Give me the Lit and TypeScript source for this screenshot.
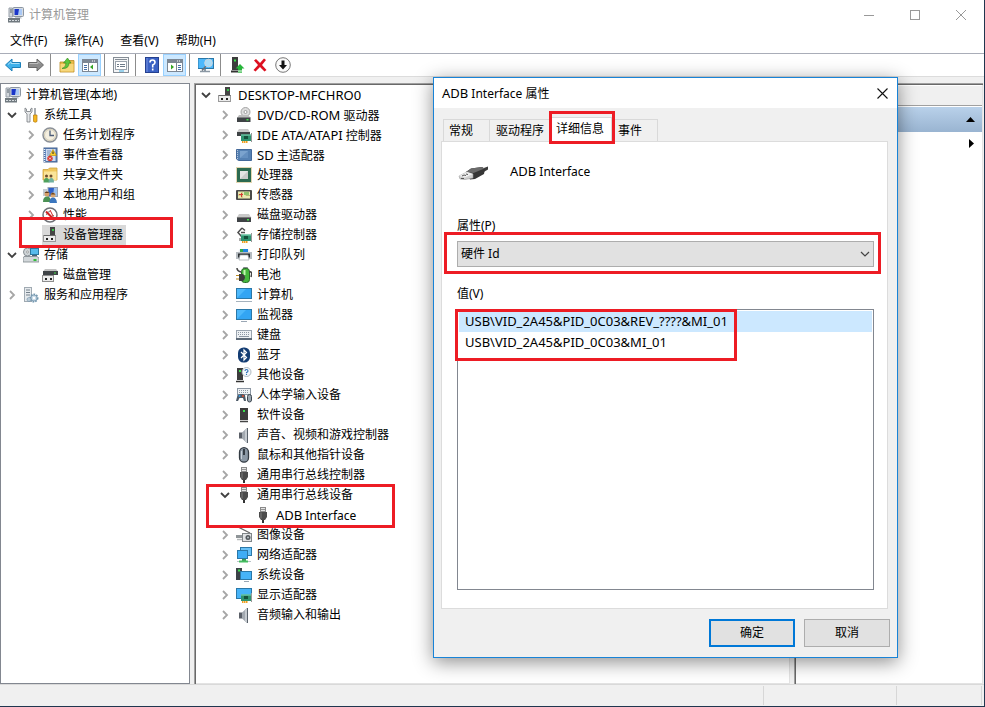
import { LitElement, html, css, svg, nothing } from "lit";
import { customElement, property, state } from "lit/decorators.js";
import { classMap } from "lit/directives/class-map.js";

const monitor = svg`
  <rect x="0.5" y="2.5" width="15" height="10" fill="#4db8fb" stroke="#2b78a8"/>
  <path d="M1 12L10 3h5v9z" fill="#33a5f3"/>
  <path d="M5 14.5h6" stroke="#9aa7b4"/>`;

const card = svg`
  <rect x="5" y="7.500" width="10" height="6.500" fill="#2f9370"/>
  <rect x="8" y="9" width="4" height="3" fill="#14513c"/>
  <path d="M5 8h10" stroke="#7fd6b4"/>
  <path d="M6 15h6" stroke="#f0a020" stroke-width="2" stroke-dasharray="1.500 .5"/>
  <path d="M15.500 6v9" stroke="#999"/>`;

const keyboard = svg`
  <rect x="0.5" y="3.500" width="15" height="9" fill="#eef1f4" stroke="#9aa4af"/>
  <path d="M2 5.500h12M2 7.500h12" stroke="#8c97a3" stroke-dasharray="1 1"/>
  <path d="M3 9.500h10" stroke="#8c97a3"/>
  <path d="M0 12h16" stroke="#5f6b78" stroke-width="2"/>`;

const speaker = svg`
  <path d="M3 5.500h3.500v6H3z" fill="#5b6068"/>
  <path d="M6 5.500L11 1v15l-5-4.500z" fill="#a3a9b0"/>
  <path d="M9 3l2-2v15l-2-2z" fill="#c6cbd0"/>
  <path d="M11.500 1v15" stroke="#59616a"/>`;

const usb = svg`
  <rect x="5.500" y="0.500" width="5" height="4" fill="#e4e4e4" stroke="#8a8a8a"/>
  <path d="M6.500 2.500h1M8.500 2.500h1" stroke="#444"/>
  <path d="M4 5h8v5l-2 3H6l-2-3z" fill="#4b4b4b"/>
  <path d="M6 5.500v6" stroke="#7c7c7c"/>
  <path d="M8 13v3" stroke="#333" stroke-width="2"/>`;

const computer = svg`
  <rect x="5" y="0.500" width="10.500" height="9" rx="1" fill="#d7dce2" stroke="#8b95a1"/>
  <rect x="6.500" y="2" width="7.500" height="6" fill="#1b36c8"/>
  <path d="M10 8l1-6h3v6z" fill="#a9c8f5"/>
  <path d="M1 1h3.500v9H1z" fill="#d2d7dc" stroke="#979fa8"/>
  <path d="M2 3h2M2 5h2" stroke="#55606b"/>
  <path d="M7 10h6l1 1.500H7z" fill="#c2c9d0"/>
  <rect x="0" y="11" width="12" height="4.500" fill="#70797f"/>
  <path d="M1 13.500h10" stroke="#d5dade" stroke-dasharray="2 1"/>`;

const device = svg`
  <path d="M8 0h5v9H8z" fill="#454545"/>
  <rect x="10" y="2" width="2" height="2" fill="#39c84b"/>
  <rect x="1.500" y="8.500" width="12" height="6" fill="#ececec" stroke="#9a9a9a"/>
  <path d="M2 8.500h11.500" stroke="#6c6c6c"/>
  <path d="M4 11h2v2H4zM9 11h2v2H9z" fill="#222"/>`;

const drive = svg`
  <path d="M3 7h10l2.500 4h-15z" fill="#c9c9c9"/>
  <path d="M1 10.500h14V15H1z" fill="#3f4346"/>
  <path d="M1 10.500h14" stroke="#777"/>
  <rect x="11" y="12" width="2" height="1.500" fill="#46e04c"/>`;

const ICONS: Record<string, unknown> = {
  computer,
  device,
  monitor,
  keyboard,
  speaker,
  usb,
  drive,
  tools: svg`
    <path d="M2 1v4l2 2v8h3V7l2-2V1L7.500 2v2.500h-4V2z" fill="#e6e8ea" stroke="#767b80" stroke-width=".8"/>
    <path d="M12 1v7" stroke="#8b9096" stroke-width="1.500"/>
    <path d="M10.500 8h3.500v6.500q-1.700 1.500-3.500 0z" fill="#f5b61f" stroke="#b47a0b" stroke-width=".7"/>`,
  clock: svg`
    <circle cx="8" cy="8" r="7" fill="#f4efe0" stroke="#8b9097" stroke-width="1.500"/>
    <circle cx="8" cy="8" r="5.500" fill="none" stroke="#d3ccb5"/>
    <path d="M8 3.500V8.500h4" fill="none" stroke="#4b5c78" stroke-width="1.300"/>`,
  events: svg`
    <rect x="2" y="1" width="13" height="14" fill="#5d83bc" stroke="#45638f"/>
    <rect x="4" y="2" width="9.500" height="12" fill="#cfdcf0"/>
    <path d="M2.500 2v13" stroke="#e7eefb" stroke-width="1.500" stroke-dasharray="1 1"/>
    <path d="M5 4h4M5 6h3M5 8h3" stroke="#7590bb"/>
    <path d="M11 2.500l3.500 6h-7z" fill="#ffd12b" stroke="#b48500" stroke-width=".6"/>
    <path d="M11 4.500v2.500" stroke="#222"/>
    <circle cx="8" cy="11.500" r="2.700" fill="#d9352d"/>
    <path d="M7 10.500l2 2M9 10.500l-2 2" stroke="#fff" stroke-width=".8"/>`,
  share: svg`
    <path d="M1 2.500h5L7.500 1H15v12H1z" fill="#f0c75c" stroke="#cda33c" stroke-width=".8"/>
    <path d="M2 4.500h12.500V13H2z" fill="#fae49a"/>
    <circle cx="4.500" cy="9" r="1.500" fill="#6d4b2c"/><circle cx="9" cy="9" r="1.500" fill="#6d4b2c"/>
    <path d="M1.500 15.500q0-4.500 3-4.500t3 4.500z" fill="#4ea05c"/>
    <path d="M6.500 15.500q0-4.500 2.800-4.500t2.700 4.500z" fill="#6fb0a0"/>`,
  users: svg`
    <rect x="6" y="0.500" width="9.500" height="9" fill="#2f60c8" stroke="#97a3b4"/>
    <path d="M11 9l1-8h3v8z" fill="#9bc1f0"/>
    <path d="M1 2h4v7H1z" fill="#c5cbd2"/>
    <circle cx="5" cy="7" r="2.500" fill="#d9a06a"/><path d="M2.500 6q2-3 5 0" fill="#5e3b1d"/>
    <circle cx="11" cy="8" r="2.500" fill="#dba873"/><path d="M8.500 7.500q2-3.500 5 0" fill="#6d4822"/>
    <path d="M1 15q0-5.500 4-5.500t4 5.500z" fill="#4b9155"/>
    <path d="M7.500 16q0-5.500 3.500-5.500t4 5.500z" fill="#3b76be"/>`,
  perf: svg`
    <circle cx="8" cy="8" r="7" fill="#fff" stroke="#6d7076" stroke-width="1.500"/>
    <path d="M4.500 8A3.500 3.500 0 0 1 8 4.500M11.500 8A3.500 3.500 0 0 1 8 11.500" fill="none" stroke="#777"/>
    <path d="M4 4.500l8 8" stroke="#cf2222" stroke-width="2"/>
    <path d="M8 3l3 6" stroke="#cf2222"/>`,
  storage: svg`
    <circle cx="4.500" cy="5" r="4" fill="#cfd5d8" stroke="#868e93"/>
    <circle cx="4.500" cy="5" r="1" fill="#fff" stroke="#777" stroke-width=".6"/>
    <rect x="7.500" y="1.500" width="8" height="6" fill="#58bbec" stroke="#2c789f"/>
    <path d="M9 8.500h5" stroke="#47647a"/>
    <path d="M1 9.500h13l2 1.500v4H0v-4z" fill="#d2d7da" stroke="#7c858b" stroke-width=".8"/>
    <rect x="10.500" y="12" width="3" height="2" fill="#31bd3a"/>`,
  disk: svg`
    <path d="M3 2h11l2 2.500H1z" fill="#c2c2c2"/>
    <path d="M1 4h15v4H1z" fill="#3f4346"/>
    <rect x="12" y="5.500" width="2" height="1" fill="#46e04c"/>
    <rect x="0.500" y="8.500" width="11" height="6" fill="#ececec" stroke="#8e8e8e"/>
    <path d="M3 11h2v2H3zM8 11h2v2H8z" fill="#222"/>`,
  services: svg`
    <rect x="1.500" y="0.500" width="7" height="14" fill="#e6eaed" stroke="#a0aab2"/>
    <path d="M3 3h4M3 5.500h4M3 8h4" stroke="#74818c"/>
    <circle cx="11" cy="11" r="3.500" fill="#c8dbe9" stroke="#6f94ad" stroke-width="2" stroke-dasharray="1.600 1"/>
    <circle cx="11" cy="11" r="3" fill="#c8dbe9" stroke="#7c9bb0" stroke-width=".8"/>
    <circle cx="11" cy="11" r="1.200" fill="#fff"/>
    <circle cx="6" cy="12.500" r="2" fill="#b9cbd8" stroke="#7492a8" stroke-dasharray="1 .6"/>`,
  dvd: svg`
    <circle cx="9.500" cy="5" r="4.500" fill="#dedede" stroke="#9c9c9c" stroke-width=".9"/>
    <circle cx="9.500" cy="5" r="1.500" fill="#fff" stroke="#8c8c8c" stroke-width=".8"/>
    <path d="M3 8h9l3 3H1z" fill="#bdbdbd"/>
    <path d="M1 10.500h13.500V15H1z" fill="#3f4346"/>
    <rect x="10.500" y="12" width="2" height="1.500" fill="#46e04c"/>`,
  ide: svg`
    <path d="M3 2h9l2 3H1z" fill="#c9c9c9"/><path d="M1 5h13v4H1z" fill="#3f4346"/>${card}`,
  sd: svg`
    <path d="M0.500 2.500h15v11h-13L.5 12z" fill="#5581b3" stroke="#44699a"/>
    <rect x="4" y="4" width="8" height="7" fill="#7ba3ce"/>
    <path d="M4 11l8-7v7z" fill="#6590c0"/>
    <path d="M1.500 3v9" stroke="#b5c8dd" stroke-dasharray="1 1"/>`,
  cpu: svg`
    <rect x="0.500" y="0.500" width="15" height="15" fill="none" stroke="#c4ac62" stroke-dasharray="1 1"/>
    <rect x="1" y="1" width="14" height="14" fill="#2c6a50"/>
    <rect x="4" y="4" width="8" height="8" fill="#e4e4e4"/>
    <path d="M4 12L12 4v8z" fill="#cacaca"/>`,
  sensor: svg`
    <rect x="0" y="3" width="16" height="10" rx="1" fill="#4a4a4a"/>
    <rect x="2" y="4.500" width="12" height="7" fill="#eaeab0"/>
    <path d="M2 8h4M6 4.500v7M10 4.500v4h4" stroke="#b8bb72" fill="none"/>
    <path d="M8 5h5v3H8z" fill="#8fc46c"/><path d="M3 7.500h4M5.500 6v4" stroke="#d83b30"/>`,
  controller: svg`
    <path d="M6 1L2 5.500 6 10M6 1l3 2.500M5 5.500h4" fill="none" stroke="#4d4d4d" stroke-width="1.500"/>
    <path d="M3 11h3v3H3z" fill="#aaa"/>${card}`,
  printer: svg`
    <path d="M3 2.500h10l1 3H2z" fill="#e9eef2"/>
    <path d="M4 2h4v3.500H4z" fill="#2fa84d"/><path d="M7 2h5v3.500H7z" fill="#1d84e0"/>
    <path d="M0 5h16v7H0z" fill="#b6bcc1"/>
    <path d="M2 6.500h12v4H2z" fill="#2f3437"/>
    <path d="M4 8h8l1 5H3z" fill="#fff" stroke="#9ca3a8" stroke-width=".7"/>`,
  battery: svg`
    <rect x="7" y="0" width="5" height="3" rx="1" fill="#7f858a"/>
    <rect x="5.500" y="1.500" width="8" height="14" rx="3" fill="#46b83d" stroke="#286c26"/>
    <path d="M8.500 3v5" stroke="#c5f4b3" stroke-width="2"/>
    <path d="M13 5q4-1 2 5" fill="none" stroke="#444" stroke-width="1.500"/>
    <path d="M0 8.500h3M0 12h3" stroke="#bd8b1e" stroke-width="1.200"/>
    <path d="M3 7h4q4 3.500 0 7H3z" fill="#3c3c3c"/><path d="M1 1q0 3 4 4" fill="none" stroke="#444" stroke-width="1.500"/>`,
  pc: svg`
    <rect x="0.500" y="1.500" width="15" height="10" fill="#4db8fb" stroke="#2b78a8"/>
    <path d="M1 11L10 2h5v9z" fill="#33a5f3"/>
    <path d="M0 14.500h16" stroke="#a5b2bd"/>`,
  bluetooth: svg`
    <rect x="2" y="0.500" width="12" height="15" rx="5.500" fill="#133c73"/>
    <path d="M5 5l5.500 5.500L8 13V3l2.500 2.500L5 11" fill="none" stroke="#fff" stroke-width="1.200"/>`,
  unknown: svg`
    <path d="M1 1h6v12H1z" fill="#3c3c3c"/><path d="M0 14.500h8" stroke="#333" stroke-width="1.500"/>
    <rect x="3" y="3" width="2" height="2" fill="#39e04b"/>
    <circle cx="10.500" cy="5" r="4.500" fill="#f4f8fb" stroke="#9da8b0" stroke-width=".8"/>
    <path d="M9 4q0-1.500 1.500-1.500T12 4q0 1-1.500 1.500v.8M10.500 7v1" fill="none" stroke="#2c6fb5" stroke-width="1.100"/>`,
  hid: svg`
    <rect x="1.500" y="1.500" width="13" height="6" fill="#eef1f4" stroke="#8c97a3"/>
    <path d="M3 3.500h10M3 5.500h10" stroke="#8c97a3" stroke-dasharray="1 1"/>
    <path d="M0 14l1.500-6q5-2 7.500 0l1 6H8l-1-3H3.500L2 14z" fill="#4c5966"/>
    <circle cx="3.500" cy="9" r="1" fill="#3b9be2"/><circle cx="7" cy="9" r="1" fill="#e0512f"/>
    <rect x="11.500" y="7.500" width="4" height="7.500" rx="2" fill="#9ba7b1" stroke="#3e4851"/>`,
  software: svg`
    <path d="M4 1h8v12H4z" fill="#3c3c3c"/><rect x="7" y="3" width="2" height="2" fill="#39e04b"/>
    <path d="M4 14.500h8" stroke="#444" stroke-width="1.500"/>`,
  mouse: svg`
    <rect x="3.500" y="0.700" width="9" height="14.500" rx="4.500" fill="#8b98a5" stroke="#333a42" stroke-width="1.300"/>
    <path d="M5.500 4v8" stroke="#c8d1d9"/>
    <path d="M8 2v6" stroke="#20262c" stroke-width="1.600"/>`,
  imaging: svg`
    <path d="M2 0l12 6" stroke="#666" stroke-width="1.300"/>
    <path d="M0 8h6v3H0z" fill="#8f9598"/>
    <rect x="6.500" y="6.500" width="9" height="8" fill="#dfe2e4" stroke="#7f8588"/>
    <circle cx="12" cy="10.500" r="2.500" fill="#52585c"/><circle cx="12" cy="10.500" r="1" fill="#b9c2c9"/>
    <path d="M1 12.500h5" stroke="#b5b9bb" stroke-width="1.500"/>`,
  network: svg`
    <rect x="4.500" y="0.500" width="11" height="8" fill="#68c1f7" stroke="#2b78a8"/>
    <rect x="1.500" y="3.500" width="10" height="8" fill="#3fadf5" stroke="#2b78a8"/>
    <path d="M6 12h4v2H6z" fill="#3a9a52"/><path d="M1 14.500h14" stroke="#b9c4c9"/><path d="M3 14.500h9" stroke="#45bd60" stroke-width="2"/>`,
  system: svg`
    <path d="M0 1h6v12H0z" fill="#3c4248"/><rect x="2" y="2.500" width="2" height="2" fill="#39e04b"/>
    <rect x="4.500" y="4.500" width="11" height="8" fill="#46b3f8" stroke="#2b78a8"/>
    <path d="M8 14.500h5" stroke="#9aa7b4"/>`,
  display: svg`
    <rect x="0.500" y="1.500" width="15" height="10" fill="#46b3f8" stroke="#2b78a8"/>${card}`,
  back: svg`<path d="M0.500 8L7 2v3.500h8.500v5H7V14z" fill="#3fb0ea" stroke="#1c7fb8"/><path d="M3 7.500l3-2.700v1.700h8.500" fill="none" stroke="#a7def8"/>`,
  forward: svg`<path d="M15.500 8L9 2v3.500H0.500v5H9V14z" fill="#8c8c8c" stroke="#686868"/><path d="M1.500 6.500H10V4.500l2 2" fill="none" stroke="#bdbdbd"/>`,
  up: svg`
    <path d="M1 5h5l1.500-1.500H15V15H1z" fill="#e8bb4b" stroke="#b98b23" stroke-width=".8"/>
    <path d="M1.500 7h13v7.500h-13z" fill="#f6d77c"/>
    <path d="M3 11.500q4-1 4-5.500H4.500L8.500 1l3.500 5h-2q0 6-7 5.500z" fill="#5cc53c" stroke="#2f8a1c" stroke-width=".6"/>`,
  treePane: svg`
    <rect x="0.500" y="2.500" width="15" height="12" fill="#fff" stroke="#7c8794"/>
    <path d="M1 4.500h14" stroke="#7c8794" stroke-width="3"/><path d="M10 4h4" stroke="#fff" stroke-dasharray="1 1"/>
    <path d="M6.500 6v8" stroke="#7c8794"/><path d="M2 8.500h3M2 10.500h3M2 12.500h3" stroke="#456fa8"/>
    <path d="M11 7.500v5L8 10z" fill="#36a526"/>`,
  actionPane: svg`
    <rect x="0.500" y="2.500" width="15" height="12" fill="#fff" stroke="#7c8794"/>
    <path d="M1 4.500h14" stroke="#7c8794" stroke-width="3"/><path d="M10 4h4" stroke="#fff" stroke-dasharray="1 1"/>
    <path d="M9.500 6v8" stroke="#7c8794"/><path d="M11 8.500h3M11 10.500h3M11 12.500h3" stroke="#456fa8"/>
    <path d="M4 7.500v5L7 10z" fill="#36a526"/>`,
  properties: svg`
    <rect x="0.500" y="0.500" width="15" height="15" fill="#f4f5f6" stroke="#858d96"/>
    <path d="M2 2.500h12" stroke="#858d96"/>
    <rect x="2.500" y="4.500" width="11" height="8" fill="#fff" stroke="#9aa3ad"/>
    <path d="M4 7.500h2M4 9.500h2M7 7.500h5M7 9.500h5" stroke="#6d7a88"/>
    <path d="M6 14h5" stroke="#7bc4e8" stroke-width="1.500"/>`,
  help: svg`
    <rect x="1.500" y="0.500" width="13" height="15" fill="#3a61c4" stroke="#24408f"/><path d="M3 1v14" stroke="#7793df"/>
    <path d="M6 5.500Q6 3 8.500 3T11 5.500q0 1.500-2.300 2.500v2.500M8.700 11.500v2" fill="none" stroke="#fff" stroke-width="1.600"/>`,
  scanScreen: svg`
    <rect x="0" y="1.500" width="15.500" height="10" fill="#4db8fb" stroke="#2b78a8"/>
    <path d="M2 14.500h10" stroke="#8b98a4" stroke-width="1.500"/><path d="M7 12v2" stroke="#8b98a4" stroke-width="2"/>
    <path d="M8 9l-4 4.500" stroke="#66707a" stroke-width="1.600"/>
    <circle cx="10.500" cy="6" r="3.800" fill="#a9dcf8" stroke="#cbd6de"/>`,
  update: svg`
    <path d="M3 0h6v13H3z" fill="#3c3c3c"/><rect x="5" y="2.500" width="2" height="2" fill="#39e04b"/>
    <path d="M2 14.500h7" stroke="#333" stroke-width="2"/>
    <path d="M11 7l4.500 4.500h-2.500V13H9v-1.500H6.500z" fill="#27b53a"/><path d="M9 14h4M9 15.800h4" stroke="#27b53a"/>`,
  remove: svg`<path d="M2 3.500L4 2l4 4 4-4.500L14 3l-4 5 4.500 5-2 1.500L8 10l-4.500 4.500L1.500 13 6 8z" fill="#dd1020"/>`,
  disable: svg`<circle cx="8" cy="8" r="7.300" fill="#fafafa" stroke="#777"/><path d="M6.500 3.500h3V8H12l-4 4.500L4 8h2.500z" fill="#111"/>`,
};

const icon = (name: string) =>
  html`<svg class="icon" viewBox="0 0 16 16" width="16" height="16" aria-hidden="true">${ICONS[name]}</svg>`;

/* Runs of Latin capitals are set one size larger so they match the height of the ideographs. */
const mixed = (text: string) =>
  text
    .split(/([A-Z][A-Z0-9/-]+(?: [A-Z][A-Z/]+)?)/)
    .map((part, i) => (i % 2 ? html`<span class="caps">${part}</span>` : part));

interface Node {
  label: string;
  icon: string;
  open?: boolean;
  closed?: boolean;
  marked?: boolean;
  selected?: boolean;
  children?: Node[];
}

const leafs = (rows: [string, string][]): Node[] =>
  rows.map(([label, name]) => ({ label, icon: name, closed: true }));

const CONSOLE: Node[] = [
  {
    label: "系统工具",
    icon: "tools",
    open: true,
    children: [
      ...leafs([
        ["任务计划程序", "clock"],
        ["事件查看器", "events"],
        ["共享文件夹", "share"],
        ["本地用户和组", "users"],
        ["性能", "perf"],
      ]),
      { label: "设备管理器", icon: "device", selected: true, marked: true },
    ],
  },
  { label: "存储", icon: "storage", open: true, children: [{ label: "磁盘管理", icon: "disk" }] },
  { label: "服务和应用程序", icon: "services", closed: true },
];

const DEVICES: Node[] = [
  {
    label: "DESKTOP-MFCHRO0",
    icon: "device",
    open: true,
    children: [
      ...leafs([
        ["DVD/CD-ROM 驱动器", "dvd"],
        ["IDE ATA/ATAPI 控制器", "ide"],
        ["SD 主适配器", "sd"],
        ["处理器", "cpu"],
        ["传感器", "sensor"],
        ["磁盘驱动器", "drive"],
        ["存储控制器", "controller"],
        ["打印队列", "printer"],
        ["电池", "battery"],
        ["计算机", "pc"],
        ["监视器", "monitor"],
        ["键盘", "keyboard"],
        ["蓝牙", "bluetooth"],
        ["其他设备", "unknown"],
        ["人体学输入设备", "hid"],
        ["软件设备", "software"],
        ["声音、视频和游戏控制器", "speaker"],
        ["鼠标和其他指针设备", "mouse"],
        ["通用串行总线控制器", "usb"],
      ]),
      {
        label: "通用串行总线设备",
        icon: "usb",
        open: true,
        marked: true,
        children: [{ label: "ADB Interface", icon: "usb" }],
      },
      ...leafs([
        ["图像设备", "imaging"],
        ["网络适配器", "network"],
        ["系统设备", "system"],
        ["显示适配器", "display"],
        ["音频输入和输出", "speaker"],
      ]),
    ],
  },
];

const base = css`
  * {
    box-sizing: border-box;
  }
  button,
  select {
    font: inherit;
    color: inherit;
    margin: 0;
    padding: 0;
    border: 0;
    background: none;
  }
  ul {
    list-style: none;
    margin: 0;
    padding: 0;
  }
  .icon {
    display: block;
    flex: none;
  }
  .caps {
    font-size: 13px;
  }
`;

@customElement("tree-view")
export class TreeView extends LitElement {
  @property({ attribute: false }) nodes: Node[] = [];
  @property() label = "";

  static styles = [
    base,
    css`
      :host {
        display: block;
      }
      .children {
        padding-left: 19px;
      }
      .item {
        position: relative;
      }
      .row {
        display: flex;
        align-items: center;
        height: 20px;
        white-space: nowrap;
      }
      .twist {
        width: 14px;
        height: 14px;
        margin-right: 4px;
        flex: none;
      }
      .twist svg {
        display: block;
      }
      .name {
        display: flex;
        align-items: center;
        gap: 5px;
        height: 20px;
        padding-right: 3px;
      }
      .selected {
        background: #d9d9d9;
      }
      .marked::after {
        content: "";
        position: absolute;
        inset: -8px 14px -3px -5px;
        border: 3px solid #ed1c24;
        pointer-events: none;
        z-index: 1;
      }
      .group::after {
        inset: -1px auto -3px -12px;
        width: 183px;
      }
    `,
  ];

  private twist(node: Node) {
    if (node.open)
      return html`<button class="twist" aria-label="折叠">
        <svg width="14" height="14" viewBox="0 0 14 14"><path d="M3 5l4 4 4-4" fill="none" stroke="#404040" stroke-width="1.800"/></svg>
      </button>`;
    if (node.closed)
      return html`<button class="twist" aria-label="展开">
        <svg width="14" height="14" viewBox="0 0 14 14"><path d="M5 3l4 4-4 4" fill="none" stroke="#a6a6a6" stroke-width="1.800"/></svg>
      </button>`;
    return html`<span class="twist"></span>`;
  }

  private item(node: Node): unknown {
    const group = !!node.children;
    return html`<li
      class=${classMap({ item: true, marked: !!node.marked, group })}
      role="treeitem"
      aria-expanded=${group ? "true" : nothing}
    >
      <div class="row">
        ${this.twist(node)}
        <span class=${classMap({ name: true, selected: !!node.selected })}>${icon(node.icon)}<span>${mixed(node.label)}</span></span>
      </div>
      ${node.children ? html`<ul class="children" role="group">${node.children.map((n) => this.item(n))}</ul>` : nothing}
    </li>`;
  }

  render() {
    return html`<ul role="tree" aria-label=${this.label}>${this.nodes.map((n) => this.item(n))}</ul>`;
  }
}

@customElement("property-dialog")
export class PropertyDialog extends LitElement {
  @state() private tab = 2;
  @state() private row = 0;

  private tabs = ["常规", "驱动程序", "详细信息", "事件"];
  private values = ["USB\\VID_2A45&PID_0C03&REV_????&MI_01", "USB\\VID_2A45&PID_0C03&MI_01"];

  static styles = [
    base,
    css`
      :host {
        display: flex;
        flex-direction: column;
        background: #f0f0f0;
        border: 1px solid #1883d7;
        box-shadow: 0 4px 18px rgba(0, 0, 0, 0.45);
      }
      .title {
        display: flex;
        align-items: center;
        justify-content: space-between;
        height: 30px;
        padding-left: 8px;
        background: #fff;
      }
      .close {
        display: grid;
        place-items: center;
        width: 30px;
        height: 30px;
      }
      .tabs {
        display: grid;
        grid-template-columns: 47px 60px 62px 46px;
        align-items: end;
        height: 33px;
        padding-left: 9px;
      }
      .tab {
        position: relative;
        height: 22px;
        padding-left: 6px;
        text-align: left;
        white-space: nowrap;
        border: 1px solid #d9d9d9;
        border-width: 1px 1px 0 0;
      }
      .tab:first-child {
        padding-left: 5px;
        border-left-width: 1px;
      }
      .tab.active {
        height: 25px;
        margin-bottom: -1px;
        padding-bottom: 2px;
        background: #fff;
      }
      .active::after,
      .combo::after,
      .values::after {
        content: "";
        position: absolute;
        border: 3px solid #ed1c24;
        pointer-events: none;
      }
      .active::after {
        inset: -7px -4px -2px -1px;
        z-index: 1;
      }
      .page {
        flex: 1;
        display: flex;
        flex-direction: column;
        margin: 0 9px 0 7px;
        padding: 20px 13px 18px 15px;
        background: #fff;
        border: 1px solid #dcdcdc;
      }
      .device {
        display: flex;
        gap: 21px;
        height: 55px;
      }
      .device p {
        margin: 0;
        line-height: 18px;
      }
      .label {
        line-height: 18px;
      }
      .combo {
        position: relative;
        display: flex;
        margin: 6px 0 18px;
      }
      .combo::after {
        inset: -9px -7px -7px -13px;
      }
      .combo select {
        appearance: none;
        flex: 1;
        height: 26px;
        padding-left: 3px;
        background: #e1e1e1;
        border: 1px solid #adadad;
        border-radius: 0;
      }
      .arrow {
        position: absolute;
        right: 4px;
        top: 8px;
        pointer-events: none;
      }
      .values {
        position: relative;
        flex: 1;
        margin-top: 6px;
        padding: 1px;
        border: 1px solid #828790;
      }
      .values::after {
        left: -3px;
        top: -1px;
        width: 276px;
        height: 46px;
      }
      .value {
        height: 21px;
        padding-left: 6px;
        font-size: 13px;
        line-height: 21px;
      }
      .value.on {
        background: #cce8ff;
      }
      .actions {
        display: flex;
        justify-content: flex-end;
        gap: 9px;
        padding: 10px 7px;
      }
      .action {
        width: 86px;
        height: 28px;
        background: #e1e1e1;
        border: 1px solid #adadad;
      }
      .default {
        border: 2px solid #0078d7;
      }
    `,
  ];

  render() {
    return html`
      <header class="title">
        <span>${mixed("ADB Interface 属性")}</span>
        <button class="close" aria-label="关闭">
          <svg width="11" height="11" viewBox="0 0 11 11"><path d="M.5.5l10 10M10.500.5l-10 10" stroke="#111" stroke-width="1.100"/></svg>
        </button>
      </header>
      <div class="tabs" role="tablist">
        ${this.tabs.map(
          (t, i) => html`<button
            class=${classMap({ tab: true, active: i === this.tab })}
            role="tab"
            aria-selected=${i === this.tab}
            @click=${() => (this.tab = i)}
          >${t}</button>`
        )}
      </div>
      <section class="page">
        <div class="device">
          <svg width="32" height="32" viewBox="0 0 32 32" aria-hidden="true">
            <path d="M24 7l7-2.500v3L25 11z" fill="#3b3b3b"/>
            <path d="M9 10l5-3.500 11-1.500 3 2-1 5-9 5-5 .5z" fill="#363636"/>
            <path d="M9 10l5-3.500 11-1.500 2.500 1.500-11 4.500z" fill="#6b6b6b"/>
            <path d="M2 14l8-4 6 2v4l-8 1.500-5-.5z" fill="#d0d0d0" stroke="#9a9a9a" stroke-width=".6"/>
            <path d="M2 14l8-4 6 2-8 3.500z" fill="#efefef"/>
            <path d="M5 14l2-1 2 .5M9 12l2 .5M4 16.500h3" fill="none" stroke="#555"/>
          </svg>
          <p>${mixed("ADB Interface")}</p>
        </div>
        <label class="label" for="property">属性(P)</label>
        <div class="combo">
          <select id="property"><option>硬件 Id</option></select>
          <svg class="arrow" width="10" height="10" viewBox="0 0 10 10"><path d="M1 3l4 4 4-4" fill="none" stroke="#444" stroke-width="1.200"/></svg>
        </div>
        <span class="label" id="values-label">值(V)</span>
        <ul class="values" role="listbox" aria-labelledby="values-label">
          ${this.values.map(
            (v, i) => html`<li
              class=${classMap({ value: true, on: i === this.row })}
              role="option"
              aria-selected=${i === this.row}
              @click=${() => (this.row = i)}
            >${v}</li>`
          )}
        </ul>
      </section>
      <footer class="actions">
        <button class="action default">确定</button>
        <button class="action">取消</button>
      </footer>
    `;
  }
}

@customElement("app-root")
export class AppRoot extends LitElement {
  private menus = ["文件(F)", "操作(A)", "查看(V)", "帮助(H)"];
  private tools: { name: string; label: string; on?: boolean }[][] = [
    [{ name: "back", label: "后退" }, { name: "forward", label: "前进" }],
    [{ name: "up", label: "上移" }, { name: "treePane", label: "控制台树", on: true }],
    [{ name: "properties", label: "属性" }],
    [{ name: "help", label: "帮助" }, { name: "actionPane", label: "操作窗格", on: true }],
    [{ name: "scanScreen", label: "扫描" }],
    [{ name: "update", label: "更新" }, { name: "remove", label: "卸载" }, { name: "disable", label: "禁用" }],
  ];

  static styles = [
    base,
    css`
      :host {
        position: relative;
        display: flex;
        flex-direction: column;
        min-height: 100vh;
        box-sizing: border-box;
        overflow: hidden;
        background: #f0f0f0;
        border: solid #20364f;
        border-width: 0 1px 1px 0;
        color: #000;
        font: 12px/16px "Noto Sans", "Noto Sans CJK SC", sans-serif;
      }
      .caption {
        display: flex;
        align-items: center;
        gap: 5px;
        height: 29px;
        padding-left: 8px;
        background: #fff;
        color: #999;
      }
      .window-buttons {
        display: flex;
        margin-left: auto;
      }
      .window-button {
        display: grid;
        place-items: center;
        width: 46px;
        height: 28px;
      }
      .menu {
        display: flex;
        gap: 17px;
        height: 25px;
        padding-left: 10px;
        background: #fff;
        border-bottom: 1px solid #a9adb8;
      }
      .toolbar {
        display: flex;
        align-items: center;
        height: 23px;
        background: #fff;
        border-bottom: 1px solid #dcdcdc;
      }
      .group {
        display: flex;
        padding: 0 3px 0 4px;
        border-right: 1px solid #8c8c8c;
      }
      .group:first-child {
        padding-left: 1px;
      }
      .group:last-child {
        border: 0;
      }
      .tool {
        display: grid;
        place-items: center;
        width: 23px;
        height: 22px;
      }
      .tool.on {
        background: #cce8ff;
        border: 1px solid #99d1ff;
      }
      .panes {
        flex: 1;
        display: grid;
        grid-template-columns: 190px minmax(0, 1fr) 189px;
        gap: 4px;
        padding: 6px 1px 0 0;
      }
      .pane {
        background: #fff;
        padding: 2px 3px 0 5px;
        box-shadow: inset 0 0 0 1px #828790;
      }
      .devices,
      .side {
        box-shadow: inset 1px 1px #a0a0a0, inset 2px 2px #696969, inset -1px -1px #e3e3e3;
      }
      .pane-root {
        display: flex;
        align-items: center;
        gap: 5px;
        height: 20px;
      }
      .side {
        padding: 3px 1px 0 2px;
      }
      .side-head {
        height: 20px;
        background: #f0f0f0;
        border-bottom: 1px solid #a0a0a0;
      }
      .side-title,
      .side-more {
        display: flex;
        align-items: center;
        justify-content: flex-end;
        width: 100%;
        height: 25px;
        padding-right: 7px;
      }
      .side-title {
        margin-top: 1px;
        background: linear-gradient(#b9d1ea, #99b4d1);
      }
      .side-more {
        height: 23px;
      }
      .status {
        display: grid;
        grid-template-columns: minmax(0, 1fr) 133px 85px 2px;
        height: 22px;
        padding: 1px 0;
        border-top: 1px solid #d9d9d9;
      }
      .status span {
        border-right: 1px solid #d7d7d7;
      }
      .dialog {
        position: absolute;
        left: 433px;
        top: 77px;
        width: 465px;
        height: 581px;
      }
    `,
  ];

  render() {
    return html`
      <header class="caption">
        ${icon("computer")}<span>计算机管理</span>
        <div class="window-buttons">
          <button class="window-button" aria-label="最小化"><svg width="10" height="10"><path d="M0 5.500h10" stroke="#999"/></svg></button>
          <button class="window-button" aria-label="最大化"><svg width="10" height="10"><rect x=".5" y=".5" width="9" height="9" fill="none" stroke="#999"/></svg></button>
          <button class="window-button" aria-label="关闭"><svg width="10" height="10"><path d="M0 0l10 10M10 0L0 10" stroke="#999"/></svg></button>
        </div>
      </header>
      <nav class="menu">${this.menus.map((m) => html`<button>${m}</button>`)}</nav>
      <div class="toolbar" role="toolbar">
        ${this.tools.map(
          (g) => html`<div class="group">
            ${g.map((t) => html`<button class=${classMap({ tool: true, on: !!t.on })} aria-label=${t.label}>${icon(t.name)}</button>`)}
          </div>`
        )}
      </div>
      <main class="panes">
        <section class="pane">
          <div class="pane-root">${icon("computer")}<span>计算机管理(本地)</span></div>
          <tree-view .nodes=${CONSOLE} label="控制台"></tree-view>
        </section>
        <section class="pane devices"><tree-view .nodes=${DEVICES} label="设备"></tree-view></section>
        <aside class="pane side">
          <div class="side-head"></div>
          <button class="side-title" aria-label="折叠"><svg width="9" height="5"><path d="M0 5L4.500 0 9 5z"/></svg></button>
          <button class="side-more" aria-label="更多操作"><svg width="7" height="9"><path d="M1 0v9l5-4.500z"/></svg></button>
        </aside>
      </main>
      <footer class="status"><span></span><span></span><span></span></footer>
      <property-dialog class="dialog" role="dialog" aria-label="ADB Interface 属性"></property-dialog>
    `;
  }
}
